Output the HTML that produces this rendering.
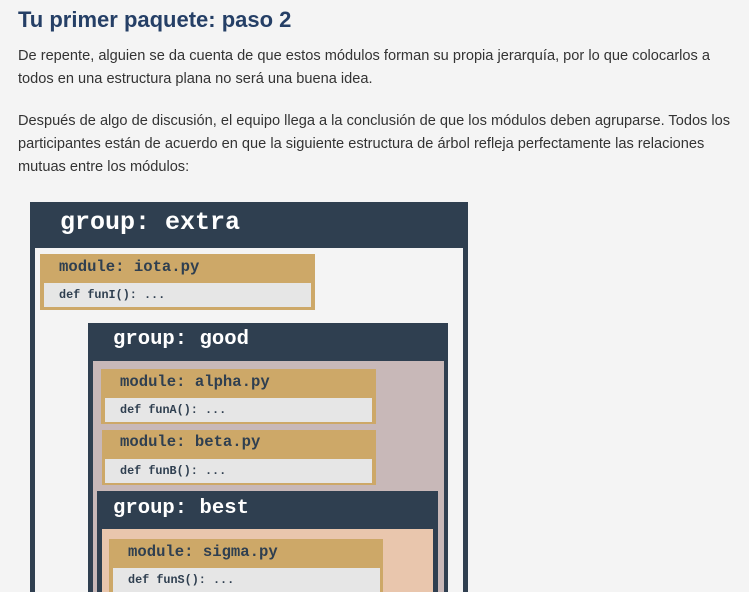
<!DOCTYPE html>
<html><head><meta charset="utf-8"><style>
html,body{margin:0;background:#f4f4f4;width:749px;height:592px;overflow:hidden;}
body{position:relative;font-family:"Liberation Sans",sans-serif;}
h1{position:absolute;left:18px;top:7px;margin:0;font-size:22px;font-weight:bold;color:#253f66;}
.p{position:absolute;left:18px;font-size:14.6px;color:#333;line-height:23px;white-space:nowrap;}
.b{position:absolute;}
.dk{background:#2f3f50;}
.mono{font-family:"Liberation Mono",monospace;font-weight:bold;white-space:pre;}
.gh{position:absolute;color:#fff;font-size:20.6px;}
.mod{background:#cda868;}
.mt{position:absolute;color:#2f3f50;font-size:15.6px;}
.def{background:#e6e6e6;}
.dt{position:absolute;color:#2f3f50;font-size:11.8px;}
</style></head><body>
<h1>Tu primer paquete: paso 2</h1>
<div class="p" style="top:45px">De repente, alguien se da cuenta de que estos módulos forman su propia jerarquía, por lo que colocarlos a<br>todos en una estructura plana no será una buena idea.</div>
<div class="p" style="top:110px">Después de algo de discusión, el equipo llega a la conclusión de que los módulos deben agruparse. Todos los<br>participantes están de acuerdo en que la siguiente estructura de árbol refleja perfectamente las relaciones<br>mutuas entre los módulos:</div>

<div class="b dk" style="left:30px;top:202px;width:438px;height:390px"></div>
<div class="mono gh" style="left:60px;top:208px;font-size:25px">group: extra</div>
<div class="b" style="left:35px;top:248px;width:428px;height:344px;background:#f4f4f4"></div>

<div class="b mod" style="left:40px;top:254px;width:275px;height:56px"></div>
<div class="mono mt" style="left:59px;top:258px">module: iota.py</div>
<div class="b def" style="left:44px;top:283px;width:267px;height:24px"></div>
<div class="mono dt" style="left:59px;top:288px">def funI(): ...</div>

<div class="b dk" style="left:88px;top:323px;width:360px;height:269px"></div>
<div class="mono gh" style="left:113px;top:328px">group: good</div>
<div class="b" style="left:93px;top:361px;width:351px;height:231px;background:#c8b8b8"></div>

<div class="b mod" style="left:101px;top:369px;width:275px;height:55px"></div>
<div class="mono mt" style="left:120px;top:373px">module: alpha.py</div>
<div class="b def" style="left:105px;top:398px;width:267px;height:24px"></div>
<div class="mono dt" style="left:120px;top:403px">def funA(): ...</div>

<div class="b mod" style="left:102px;top:430px;width:274px;height:55px"></div>
<div class="mono mt" style="left:120px;top:433px">module: beta.py</div>
<div class="b def" style="left:105px;top:459px;width:267px;height:24px"></div>
<div class="mono dt" style="left:120px;top:464px">def funB(): ...</div>

<div class="b dk" style="left:97px;top:491px;width:341px;height:101px"></div>
<div class="mono gh" style="left:113px;top:497px">group: best</div>
<div class="b" style="left:102px;top:529px;width:331px;height:63px;background:#e9c6ad"></div>

<div class="b mod" style="left:109px;top:539px;width:274px;height:53px"></div>
<div class="mono mt" style="left:128px;top:543px">module: sigma.py</div>
<div class="b def" style="left:113px;top:568px;width:267px;height:24px"></div>
<div class="mono dt" style="left:128px;top:573px">def funS(): ...</div>
</body></html>
